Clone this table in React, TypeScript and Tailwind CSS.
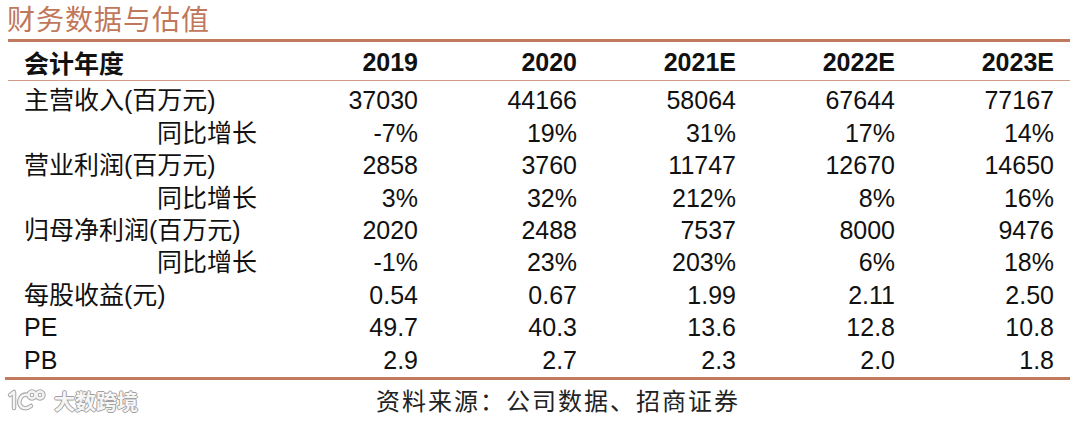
import React from "react";

const rows: { label: string; sub?: boolean; vals: string[] }[] = [
  { label: "主营收入(百万元)", vals: ["37030", "44166", "58064", "67644", "77167"] },
  { label: "同比增长", sub: true, vals: ["-7%", "19%", "31%", "17%", "14%"] },
  { label: "营业利润(百万元)", vals: ["2858", "3760", "11747", "12670", "14650"] },
  { label: "同比增长", sub: true, vals: ["3%", "32%", "212%", "8%", "16%"] },
  { label: "归母净利润(百万元)", vals: ["2020", "2488", "7537", "8000", "9476"] },
  { label: "同比增长", sub: true, vals: ["-1%", "23%", "203%", "6%", "18%"] },
  { label: "每股收益(元)", vals: ["0.54", "0.67", "1.99", "2.11", "2.50"] },
  { label: "PE", vals: ["49.7", "40.3", "13.6", "12.8", "10.8"] },
  { label: "PB", vals: ["2.9", "2.7", "2.3", "2.0", "1.8"] },
];

const years = ["2019", "2020", "2021E", "2022E", "2023E"];

function Logo() {
  const paths = (
    <>
      <path d="M4 7 L8 4 L8 20" />
      <path d="M22 7 C15 5 12 13 14 17 C16 21 21 21 25 18" />
      <circle cx="26" cy="7" r="3.5" />
      <circle cx="34" cy="7" r="3.5" />
    </>
  );
  return (
    <svg width="42" height="24" viewBox="0 0 42 24" fill="none" strokeLinecap="round" strokeLinejoin="round">
      <g stroke="#a8a8a8" strokeWidth="4.5">{paths}</g>
      <g stroke="#f4f4f4" strokeWidth="2.5">{paths}</g>
    </svg>
  );
}

export default function App() {
  return (
    <div className="relative w-[1080px] h-[422px] overflow-hidden bg-white font-['Liberation_Sans','Noto_Sans_CJK_SC',sans-serif] text-[#111]">
      <div className="h-[39px] pl-[7px] pt-[3px] text-[28px] leading-[30px] tracking-[1px] text-[#c0775b] font-['Noto_Sans_CJK_SC',sans-serif]">
        财务数据与估值
      </div>
      <div className="ml-[8px] w-[1062px] h-[3px] bg-[#c27a5e]" />
      <div className="ml-[8px] w-[1062px] h-[38px] flex items-center pt-[3px] text-[25px] font-bold">
        <div className="w-[267px] pl-[16px] font-['Noto_Sans_CJK_SC',sans-serif] font-bold">会计年度</div>
        {years.map((y) => (
          <div key={y} className="w-[159px] pr-[16px] text-right">
            {y}
          </div>
        ))}
      </div>
      <div className="ml-[8px] w-[1062px] h-[1px] bg-[#cf9c86]" />
      <div className="ml-[8px] w-[1062px] pt-[4px] text-[25px]">
        {rows.map((r, i) => (
          <div key={i} className="h-[32.4px] flex items-center">
            <div className={(r.sub ? "pl-[149px] " : "pl-[16px] ") + "w-[267px] whitespace-nowrap"}>{r.label}</div>
            {r.vals.map((v, j) => (
              <div key={j} className="w-[159px] pr-[16px] text-right">
                {v}
              </div>
            ))}
          </div>
        ))}
      </div>
      <div className="ml-[5px] w-[1065px] h-[3px] bg-[#c27a5e]" />
      <div className="pl-[376px] pt-[7px] text-[24px] leading-[26px] tracking-[2px] text-[#222] font-['Noto_Sans_CJK_SC',sans-serif]">
        资料来源：公司数据、招商证券
      </div>
      <div className="absolute left-[6px] top-[388px] flex items-center gap-[6px]">
        <Logo />
        <div className="text-[21px] leading-[24px] text-[#f6f6f6] font-bold font-['Noto_Sans_CJK_SC',sans-serif] [text-shadow:1px_0_0_#a0a0a0,-1px_0_0_#a0a0a0,0_1px_0_#a0a0a0,0_-1px_0_#a0a0a0]">
          大数跨境
        </div>
      </div>
    </div>
  );
}
